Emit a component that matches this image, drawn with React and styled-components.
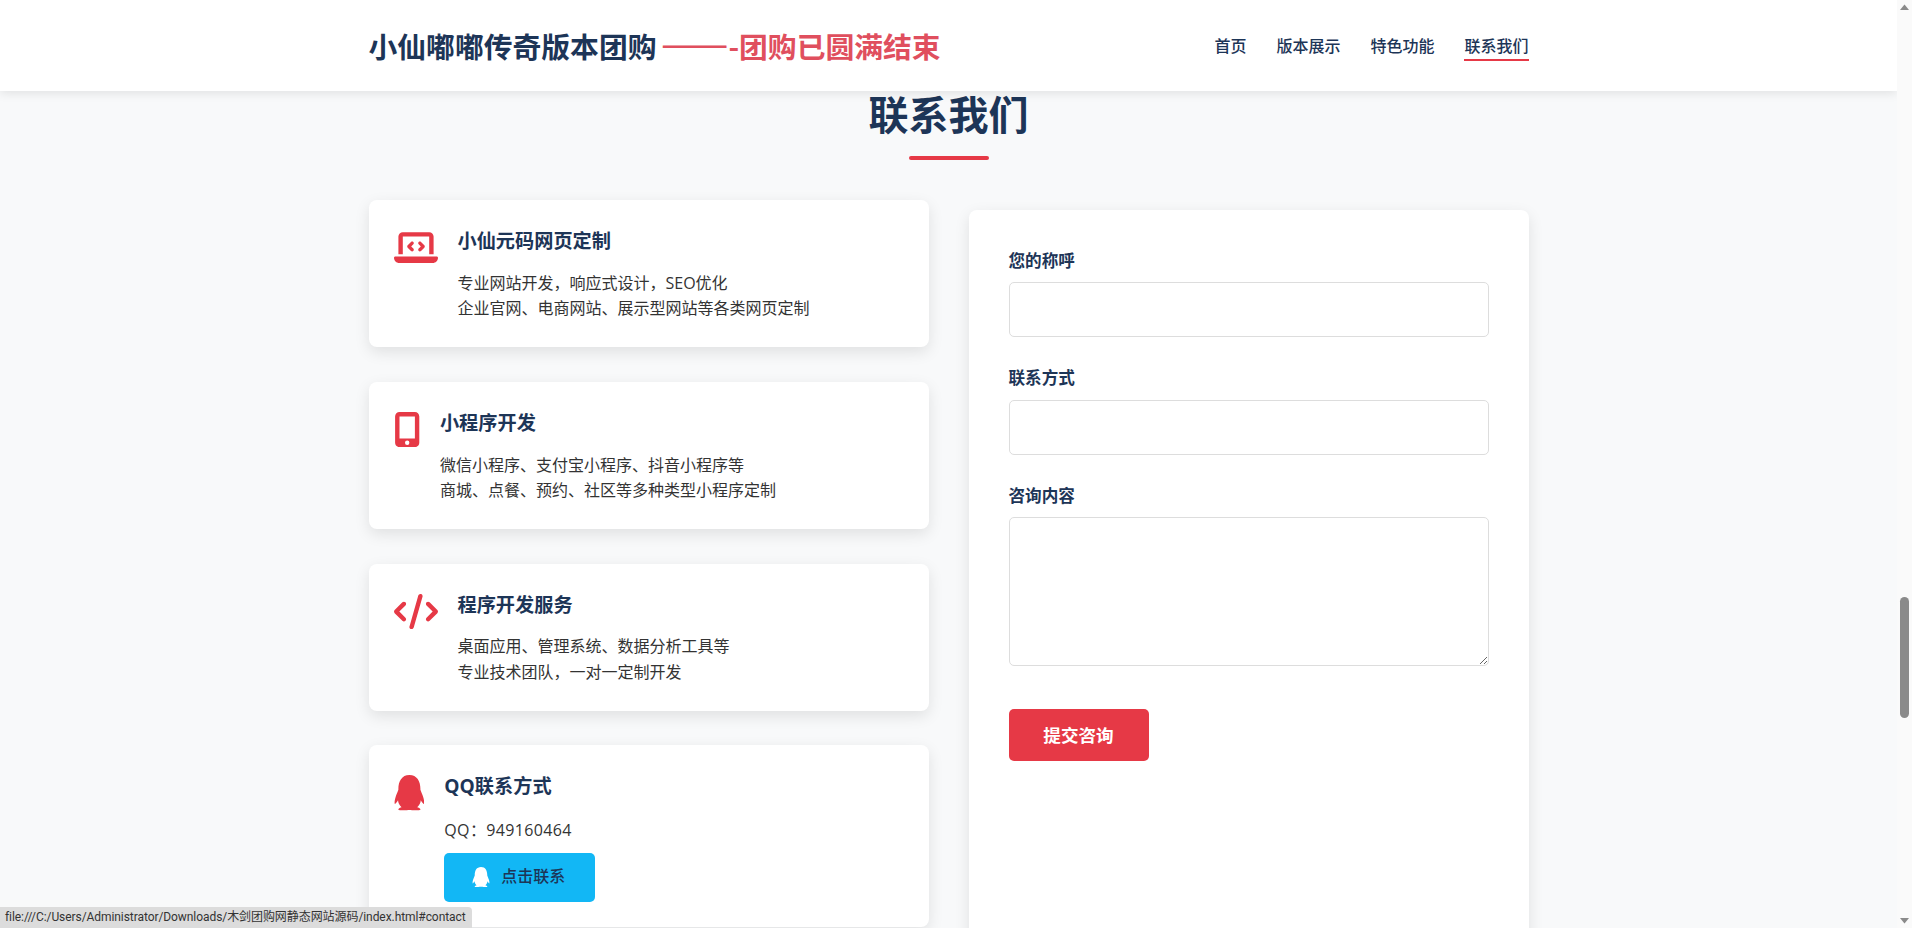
import React from "react";
import styled, { createGlobalStyle } from "styled-components";
import { FaLaptopCode, FaMobileScreenButton, FaCode, FaQq } from "react-icons/fa6";

const Global = createGlobalStyle`
  * { box-sizing: border-box; margin: 0; padding: 0; }
  html, body { height: 100%; overflow: hidden; }
  body {
    font-family: "Open Sans", "Noto Sans CJK SC", sans-serif;
    font-size: 16px;
    line-height: 1.6;
    color: #333;
    background: #f8f9fa;
  }
`;

const Shell = styled.div`
  display: flex;
  width: 1912px;
  height: 928px;
  overflow: hidden;
`;
const Page = styled.div`
  position: relative;
  flex: 1;
  min-width: 0;
  overflow: hidden;
  background: #f8f9fa;
`;
const Header = styled.header`
  position: absolute;
  top: 0;
  left: 0;
  right: 0;
  z-index: 5;
  height: 91px;
  background: #fff;
  box-shadow: 0 2px 10px rgba(0, 0, 0, 0.1);
`;
const HeaderInner = styled.div`
  width: 1160px;
  height: 100%;
  margin: 0 auto;
  display: flex;
  align-items: center;
  justify-content: space-between;
`;
const Logo = styled.div`
  font-family: "Noto Sans CJK SC", sans-serif;
  font-size: 28.8px;
  font-weight: 700;
  line-height: 46px;
  color: #1d3557;
  white-space: nowrap;
`;
const LogoAccent = styled.span`
  margin-left: -2px;
  color: #e04f5e;
`;
const LogoDash = styled.span`
  font-size: 40.2px;
  font-weight: 400;
  line-height: 0;
`;
const Nav = styled.nav`
  display: flex;
  gap: 30px;
  margin-top: 2px;
`;
const NavLink = styled.a`
  position: relative;
  display: block;
  color: #1d3557;
  font-weight: 500;
  text-decoration: none;
  &::after {
    content: "";
    position: absolute;
    left: 0;
    right: 0;
    bottom: -2px;
    height: 2px;
    background: ${(p) => (p.$active ? "#e63946" : "transparent")};
  }
`;
const Section = styled.section`
  width: 1160px;
  margin: 0 auto;
  padding-top: 83px;
`;
const Heading = styled.h2`
  font-size: 40px;
  font-weight: 700;
  line-height: 64px;
  color: #1d3557;
  text-align: center;
  margin-bottom: 40px;
  &::after {
    content: "";
    display: block;
    width: 80px;
    height: 4px;
    margin: 9px auto 0;
    background: #e63946;
    border-radius: 2px;
  }
`;
const Columns = styled.div`
  display: grid;
  grid-template-columns: 560px 560px;
  gap: 40px;
  align-items: start;
`;
const InfoList = styled.div`
  display: flex;
  flex-direction: column;
  gap: 34.9px;
`;
const Card = styled.div`
  display: flex;
  align-items: flex-start;
  gap: 20px;
  padding: 25px;
  background: #fff;
  border-radius: 8px;
  box-shadow: 0 5px 15px rgba(0, 0, 0, 0.1);
`;
const iconSize = `
  flex: none;
  height: 35.2px;
  margin-top: 5px;
  color: #e63946;
`;
const WideIcon = styled.svg`
  ${iconSize}
  width: 44px;
`;
const PhoneIcon = styled(FaMobileScreenButton)`
  ${iconSize}
  width: 26.4px;
`;
const PenguinIcon = styled(FaQq)`
  ${iconSize}
  width: 30.8px;
`;
const CardBody = styled.div`
  min-width: 0;
`;
const CardTitle = styled.h3`
  font-size: 19.2px;
  font-weight: 700;
  color: #1d3557;
  padding-top: 1px;
  margin-bottom: 14px;
`;
const CardText = styled.p`
  color: #333;
`;
const QqLine = styled(CardText)`
  padding-top: 1.5px;
  letter-spacing: 0.35px;
`;
const QqButton = styled.a`
  display: inline-flex;
  align-items: center;
  gap: 11px;
  width: 151px;
  height: 49px;
  margin-top: 9.5px;
  padding: 0 28px;
  background: #12b7f5;
  border-radius: 5px;
  color: #1d3557;
  font-weight: 500;
  text-decoration: none;
`;
const QqButtonIcon = styled(FaQq)`
  flex: none;
  width: 18px;
  height: 20px;
  color: #fff;
`;
const FormCard = styled.form`
  margin-top: 10px;
  min-height: 800px;
  padding: 37.5px 40px;
  background: #fff;
  border-radius: 8px;
  box-shadow: 0 5px 15px rgba(0, 0, 0, 0.1);
`;
const Field = styled.div`
  margin-bottom: 28px;
`;
const Label = styled.label`
  display: block;
  margin-bottom: 8px;
  font-size: 16.6px;
  font-weight: 700;
  color: #1d3557;
`;
const TextInput = styled.input`
  display: block;
  width: 100%;
  height: 55px;
  padding: 15px;
  border: 1px solid #ddd;
  border-radius: 5px;
  background: #fff;
  font: inherit;
`;
const TextArea = styled.textarea`
  display: block;
  width: 100%;
  height: 149px;
  padding: 15px;
  border: 1px solid #ddd;
  border-radius: 5px;
  background: #fff;
  font: inherit;
  resize: vertical;
`;
const Submit = styled.button`
  display: block;
  margin-top: 43px;
  width: 140px;
  height: 52px;
  border: none;
  border-radius: 5px;
  background: #e63946;
  color: #fff;
  font: inherit;
  font-size: 17.6px;
  font-weight: 700;
`;
const StatusBar = styled.div`
  position: absolute;
  left: 0;
  bottom: 0;
  z-index: 9;
  height: 21px;
  padding: 0 6px 0 5px;
  background: #dcdcdc;
  border-top-right-radius: 4px;
  font-family: Roboto, "Noto Sans CJK SC", sans-serif;
  font-size: 12px;
  letter-spacing: -0.07px;
  line-height: 21px;
  color: #333;
  white-space: nowrap;
`;
const ScrollTrack = styled.aside`
  flex: none;
  display: flex;
  flex-direction: column;
  align-items: center;
  width: 15px;
  height: 928px;
  background: #fafafa;
`;
const ScrollArrow = styled.svg`
  flex: none;
  width: 15px;
  height: 15px;
  fill: #8a8a8a;
`;
const ScrollGutter = styled.div`
  flex: 1;
  width: 100%;
  padding-top: 582px;
`;
const ScrollThumb = styled.div`
  width: 9px;
  height: 121px;
  margin: 0 auto;
  border-radius: 5px;
  background: #8a8a8a;
`;

const cards = [
  { id: "web", icon: <WideIcon as={FaLaptopCode} />, title: "小仙元码网页定制", lines: ["专业网站开发，响应式设计，SEO优化", "企业官网、电商网站、展示型网站等各类网页定制"] },
  { id: "mini", icon: <PhoneIcon />, title: "小程序开发", lines: ["微信小程序、支付宝小程序、抖音小程序等", "商城、点餐、预约、社区等多种类型小程序定制"] },
  { id: "dev", icon: <WideIcon as={FaCode} />, title: "程序开发服务", lines: ["桌面应用、管理系统、数据分析工具等", "专业技术团队，一对一定制开发"] },
];

export default function App() {
  return (
    <Shell>
      <Global />
      <Page>
        <Header>
          <HeaderInner>
            <Logo>小仙嘟嘟传奇版本团购<LogoAccent> <LogoDash>——</LogoDash>-团购已圆满结束</LogoAccent></Logo>
            <Nav>
              <NavLink>首页</NavLink>
              <NavLink>版本展示</NavLink>
              <NavLink>特色功能</NavLink>
              <NavLink $active>联系我们</NavLink>
            </Nav>
          </HeaderInner>
        </Header>
        <Section>
          <Heading>联系我们</Heading>
          <Columns>
            <InfoList>
              {cards.map((c) => (
                <Card key={c.id}>
                  {c.icon}
                  <CardBody>
                    <CardTitle>{c.title}</CardTitle>
                    {c.lines.map((l) => <CardText key={l}>{l}</CardText>)}
                  </CardBody>
                </Card>
              ))}
              <Card>
                <PenguinIcon />
                <CardBody>
                  <CardTitle>QQ联系方式</CardTitle>
                  <QqLine>QQ：949160464</QqLine>
                  <QqButton><QqButtonIcon />点击联系</QqButton>
                </CardBody>
              </Card>
            </InfoList>
            <FormCard>
              <Field>
                <Label>您的称呼</Label>
                <TextInput type="text" />
              </Field>
              <Field>
                <Label>联系方式</Label>
                <TextInput type="text" />
              </Field>
              <Field>
                <Label>咨询内容</Label>
                <TextArea />
              </Field>
              <Submit type="button">提交咨询</Submit>
            </FormCard>
          </Columns>
        </Section>
        <StatusBar>file:///C:/Users/Administrator/Downloads/木剑团购网静态网站源码/index.html#contact</StatusBar>
      </Page>
      <ScrollTrack>
        <ScrollArrow viewBox="0 0 15 15"><path d="M7.5 4.5 L12 10 H3 Z" /></ScrollArrow>
        <ScrollGutter><ScrollThumb /></ScrollGutter>
        <ScrollArrow viewBox="0 0 15 15"><path d="M7.5 10.5 L12 5 H3 Z" /></ScrollArrow>
      </ScrollTrack>
    </Shell>
  );
}
